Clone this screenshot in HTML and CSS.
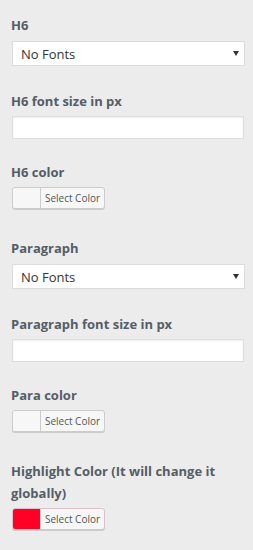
FILE: index.html
```html
<!DOCTYPE html>
<html lang="en">
<head>
  <meta charset="UTF-8">
  <meta name="viewport" content="width=device-width, initial-scale=1.0">
  <title>Typography Settings</title>
  <link rel="stylesheet" href="styles.css">
</head>
<body>
  <form class="settings">
    <div class="field field-select">
      <label for="h6-font">H6</label>
      <span class="select-wrap">
        <select id="h6-font">
          <option>No Fonts</option>
        </select>
      </span>
    </div>

    <div class="field">
      <label for="h6-size">H6 font size in px</label>
      <input type="text" id="h6-size">
    </div>

    <div class="field field-color">
      <label>H6 color</label>
      <button type="button" class="color-result">
        <span class="swatch"></span>
        <span class="color-text">Select Color</span>
      </button>
    </div>

    <div class="field field-select">
      <label for="p-font">Paragraph</label>
      <span class="select-wrap">
        <select id="p-font">
          <option>No Fonts</option>
        </select>
      </span>
    </div>

    <div class="field">
      <label for="p-size">Paragraph font size in px</label>
      <input type="text" id="p-size">
    </div>

    <div class="field field-color">
      <label>Para color</label>
      <button type="button" class="color-result">
        <span class="swatch"></span>
        <span class="color-text">Select Color</span>
      </button>
    </div>

    <div class="field field-color">
      <label class="wrap">Highlight Color (It will change it globally)</label>
      <button type="button" class="color-result highlight">
        <span class="swatch"></span>
        <span class="color-text">Select Color</span>
      </button>
    </div>
  </form>
</body>
</html>
```

FILE: styles.css
```css
body {
  background-color: #ececec;
  color: #555d66;
  font-family: "Open Sans", Arial, sans-serif;
  margin: 0;
  padding: 0;
}

.settings {
  padding: 14px 9px 0 11px;
}

.field {
  display: flex;
  flex-direction: column;
  align-items: flex-start;
  margin-bottom: 22px;
}

.field-select {
  margin-bottom: 24px;
}

.field-color {
  margin-bottom: 28px;
}

.field label {
  font-size: 13px;
  font-weight: 700;
  line-height: 22px;
  margin-bottom: 4px;
}

.field label.wrap {
  max-width: 215px;
}

.select-wrap {
  position: relative;
  display: block;
  width: 233px;
  margin-left: 1px;
}

.select-wrap select {
  display: block;
  width: 100%;
  height: 25px;
  margin-top: 1px;
  padding: 0 20px 0 8px;
  border: 1px solid #dcdcdc;
  border-radius: 0;
  background-color: #fff;
  color: #333;
  font-family: "Open Sans", Arial, sans-serif;
  font-size: 13px;
  -webkit-appearance: none;
  appearance: none;
}

.select-wrap::after {
  content: "";
  position: absolute;
  right: 6px;
  top: 11px;
  border-left: 3px solid transparent;
  border-right: 3px solid transparent;
  border-top: 5px solid #333;
}

.field input {
  width: 232px;
  height: 23px;
  box-sizing: border-box;
  margin: 0 0 0 1px;
  border: 1px solid #ddd;
  background-color: #fff;
  box-shadow: inset 0 1px 2px rgba(0, 0, 0, 0.07);
}

.color-result {
  display: flex;
  align-items: stretch;
  width: 93px;
  height: 22px;
  padding: 0;
  margin: 0 0 0 1px;
  border: 1px solid #ccc;
  border-radius: 3px;
  background-color: #f7f7f7;
  box-shadow: 0 1px 0 #ccc;
  overflow: hidden;
  cursor: pointer;
}

.color-result .swatch {
  width: 27px;
  border-right: 1px solid #ccc;
  background-color: #f7f7f7;
}

.color-result .color-text {
  flex: 1;
  font-family: "Open Sans", Arial, sans-serif;
  font-size: 10px;
  line-height: 20px;
  color: #555;
  text-align: center;
}

.color-result.highlight {
  border-color: #d9c3c8;
}

.color-result.highlight .swatch {
  background-color: #ff0026;
}
```
